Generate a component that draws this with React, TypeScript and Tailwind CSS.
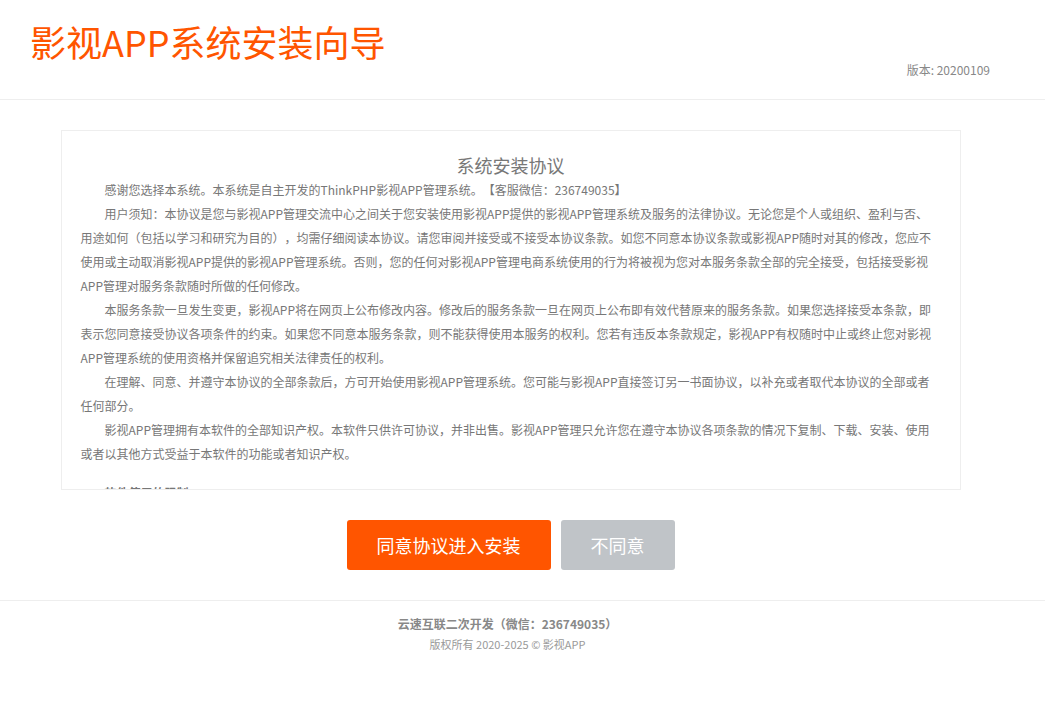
import React from "react";

const font = { fontFamily: '"Microsoft YaHei", "Noto Sans CJK SC", "Noto Sans", sans-serif' };

const paras: string[][] = [
  ["感谢您选择本系统。本系统是自主开发的ThinkPHP影视APP管理系统。【客服微信：236749035】"],
  [
    "用户须知：本协议是您与影视APP管理交流中心之间关于您安装使用影视APP提供的影视APP管理系统及服务的法律协议。无论您是个人或组织、盈利与否、",
    "用途如何（包括以学习和研究为目的），均需仔细阅读本协议。请您审阅并接受或不接受本协议条款。如您不同意本协议条款或影视APP随时对其的修改，您应不",
    "使用或主动取消影视APP提供的影视APP管理系统。否则，您的任何对影视APP管理电商系统使用的行为将被视为您对本服务条款全部的完全接受，包括接受影视",
    "APP管理对服务条款随时所做的任何修改。",
  ],
  [
    "本服务条款一旦发生变更，影视APP将在网页上公布修改内容。修改后的服务条款一旦在网页上公布即有效代替原来的服务条款。如果您选择接受本条款，即",
    "表示您同意接受协议各项条件的约束。如果您不同意本服务条款，则不能获得使用本服务的权利。您若有违反本条款规定，影视APP有权随时中止或终止您对影视",
    "APP管理系统的使用资格并保留追究相关法律责任的权利。",
  ],
  [
    "在理解、同意、并遵守本协议的全部条款后，方可开始使用影视APP管理系统。您可能与影视APP直接签订另一书面协议，以补充或者取代本协议的全部或者",
    "任何部分。",
  ],
  [
    "影视APP管理拥有本软件的全部知识产权。本软件只供许可协议，并非出售。影视APP管理只允许您在遵守本协议各项条款的情况下复制、下载、安装、使用",
    "或者以其他方式受益于本软件的功能或者知识产权。",
  ],
];

export default function App() {
  return (
    <div className="min-h-screen bg-white [text-spacing-trim:space-all]" style={font}>
      <header className="h-[100px] border-b border-[#eeeeee] flex items-start justify-between">
        <h1 className="pl-[30px] pt-[19px] text-[36px] leading-[44px] text-[#ff5500] font-normal">
          影视APP系统安装向导
        </h1>
        <div className="pr-[55px] pt-[61px] text-[12px] leading-[18px] text-[#888888]">
          版本: 20200109
        </div>
      </header>

      <div className="w-[1021px]">
        <main className="pt-[30px] flex flex-col items-center">
          <div className="w-[900px] h-[360px] border border-[#eeeeee] overflow-hidden px-[19px] pt-[21px] text-[#777777]">
            <h2 className="text-center text-[18px] leading-[26px] font-normal text-[#777777]">
              系统安装协议
            </h2>
            {paras.map((lines, i) => (
              <p key={i} className="text-[12px] leading-[24px] indent-[24px] whitespace-nowrap">
                {lines.map((l, j) => (
                  <React.Fragment key={j}>
                    {j > 0 && <br />}
                    {l}
                  </React.Fragment>
                ))}
              </p>
            ))}
            <p className="mt-[15px] text-[12px] leading-[24px] font-bold">二、软件使用的限制</p>
            <p className="text-[12px] leading-[24px] indent-[24px]">
              您不得对本软件进行反向工程、反向编译或反汇编，不得删除本软件上的任何版权声明。
            </p>
          </div>

          <div className="mt-[30px] flex gap-[10px]">
            <button className="w-[204px] h-[50px] rounded-[3px] bg-[#ff5500] text-white text-[18px]">
              同意协议进入安装
            </button>
            <button className="w-[114px] h-[50px] rounded-[3px] bg-[#c0c4c8] text-white text-[18px]">
              不同意
            </button>
          </div>
        </main>
      </div>

      <footer className="mt-[30px] border-t border-[#eeeeee] pt-[13px]">
        <div className="w-[1015px] text-center">
          <div className="text-[12px] leading-[20px] font-bold text-[#888888]">
            云速互联二次开发（微信：236749035）
          </div>
          <div className="text-[11px] leading-[20px] text-[#999999]">版权所有 2020-2025 © 影视APP</div>
        </div>
      </footer>
    </div>
  );
}
